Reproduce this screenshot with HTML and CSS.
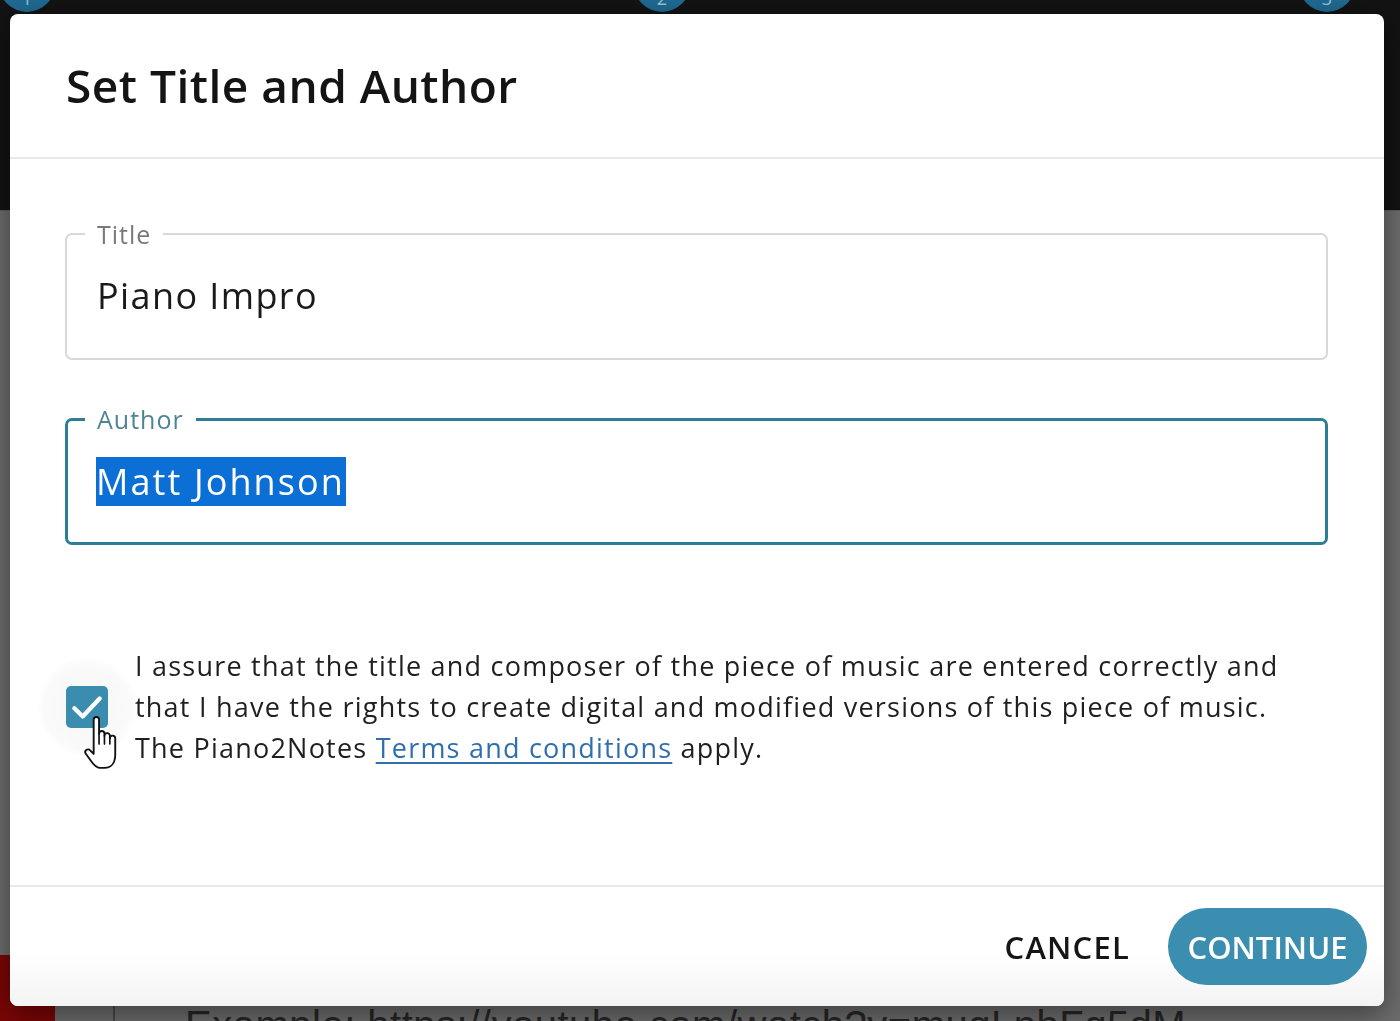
FILE: index.html
```html
<!DOCTYPE html>
<html lang="en">
<head>
<meta charset="utf-8">
<title>Set Title and Author</title>
<link rel="stylesheet" href="styles.css">
</head>
<body>
<div class="page">
  <div class="topband">
    <div class="steps">
      <span class="step step-1">1</span>
      <span class="step step-2">2</span>
      <span class="step step-3">3</span>
    </div>
  </div>
  <div class="main">
    <div class="example-row">
      <div class="red-block"></div>
      <div class="example-box">Example: https://youtube.com/watch?v=muqLnbFq5dM</div>
    </div>
  </div>
</div>

<div class="overlay">
  <div class="dialog" role="dialog" aria-labelledby="dlg-title">
    <header class="dialog-header">
      <h2 id="dlg-title" class="dialog-title">Set Title and Author</h2>
    </header>

    <div class="dialog-body">
      <fieldset class="field">
        <legend class="field-label">Title</legend>
        <div class="field-value">Piano Impro</div>
      </fieldset>

      <fieldset class="field field-focused">
        <legend class="field-label">Author</legend>
        <div class="field-value"><span class="selected">Matt Johnson</span></div>
      </fieldset>

      <div class="consent">
        <div class="check-wrap">
          <span class="checkbox">
            <svg viewBox="0 0 24 24" width="38" height="38" aria-hidden="true">
              <path d="M4 12.8 L9.3 18 L20 6.6" fill="none" stroke="#ffffff" stroke-width="2.7" stroke-linecap="round" stroke-linejoin="round"/>
            </svg>
          </span>
          <svg class="cursor" viewBox="0 0 38 54" width="40" height="56" aria-hidden="true">
            <path d="M10 31 L10 5.5 A2.6 2.6 0 0 1 15.2 5.5 L15.2 19 A2.6 2.6 0 0 1 20.4 19 L20.4 21 A2.6 2.6 0 0 1 25.6 21 L25.6 23.5 A2.6 2.6 0 0 1 30.8 23.5 L30.8 39 C30.8 47 27 52 20.5 52 L16.5 52 C12.5 52 10.5 49.5 8 46 L2.6 38.5 A2.6 2.6 0 0 1 6.6 35 L10 38.5 Z" fill="#ffffff" stroke="#111111" stroke-width="1.8" stroke-linejoin="round"/>
            <path d="M15.2 19 L15.2 29 M20.4 21 L20.4 29 M25.6 23.5 L25.6 29" fill="none" stroke="#111111" stroke-width="1.6" stroke-linecap="round"/>
          </svg>
        </div>
        <p class="consent-text">I assure that the title and composer of the piece of music are entered correctly and<br>that I have the rights to create digital and modified versions of this piece of music.<br>The Piano2Notes <a href="#" class="link">Terms and conditions</a> apply.</p>
      </div>
    </div>

    <footer class="dialog-footer">
      <button type="button" class="btn btn-text">CANCEL</button>
      <button type="button" class="btn btn-primary">CONTINUE</button>
    </footer>
  </div>
</div>
</body>
</html>
```

FILE: styles.css
```css
* { box-sizing: border-box; }

html, body {
  margin: 0;
  padding: 0;
}

body {
  width: 1400px;
  height: 1021px;
  overflow: hidden;
  background: #6d6d6d;
  font-family: "Open Sans", "Liberation Sans", sans-serif;
  color: #1c1c1c;
}

/* ---------- page behind the dialog ---------- */
.page {
  width: 1400px;
  height: 1021px;
  display: flex;
  flex-direction: column;
}

.topband {
  height: 210px;
  background: #131313;
  overflow: hidden;
}

.steps {
  display: flex;
  margin-top: -44px;
}

.step {
  width: 56px;
  height: 56px;
  border-radius: 50%;
  background: #1f6b93;
  color: #9cc3d8;
  display: flex;
  align-items: flex-end;
  justify-content: center;
  font-size: 18px;
  padding-bottom: 2px;
  flex: none;
}

.step-1 { margin-left: -1px; }
.step-2 { margin-left: 579px; }
.step-3 { margin-left: 609px; }

.main {
  flex: 1;
  display: flex;
  flex-direction: column;
  justify-content: flex-end;
  border-top: 1px solid #5e5e5e;
}

.example-row {
  display: flex;
  height: 66px;
}

.red-block {
  width: 55px;
  background: #7c0505;
}

.example-box {
  flex: 1;
  border-left: 2px solid #4a4a4a;
  margin-left: 58px;
  padding: 50px 0 0 70px;
  font-size: 40px;
  line-height: 40px;
  color: #262626;
  white-space: nowrap;
  font-family: "Liberation Sans", sans-serif;
  letter-spacing: 0.5px;
}

/* ---------- dialog ---------- */
.overlay {
  position: fixed;
  inset: 0;
  padding: 14px 16px 15px 10px;
  display: flex;
}

.dialog {
  flex: 1;
  background: #ffffff;
  border-radius: 8px;
  box-shadow: 0 8px 30px rgba(0, 0, 0, 0.45);
  display: flex;
  flex-direction: column;
  overflow: hidden;
}

.dialog-header {
  height: 145px;
  padding: 0 56px;
  display: flex;
  align-items: center;
  border-bottom: 2px solid #e9e9e9;
}

.dialog-title {
  margin: 0;
  padding-bottom: 2px;
  font-size: 46px;
  font-weight: 600;
  letter-spacing: 0.5px;
  color: #141414;
}

.dialog-body {
  flex: 1;
  padding: 60px 56px 0 55px;
  display: flex;
  flex-direction: column;
}

.field {
  margin: 0 0 44px 0;
  padding: 0 0 0 18px;
  border: 2px solid #d8d8d8;
  border-radius: 7px;
  height: 141px;
  min-width: 0;
}

.field-label {
  padding: 0 12px;
  font-size: 25px;
  line-height: 30px;
  color: #7a7a7a;
  letter-spacing: 1px;
}

.field-value {
  margin-left: 12px;
  margin-top: 22px;
  font-size: 36px;
  line-height: 49px;
  color: #1a1a1a;
  letter-spacing: 1.4px;
}

.field-focused {
  border: 3px solid #2c7d96;
  padding-left: 17px;
}

.field-focused .field-label {
  color: #4e8596;
}

.field-focused .field-value {
  margin-left: 11px;
  margin-top: 23px;
  letter-spacing: 2.1px;
}

.selected {
  display: inline-block;
  line-height: 49px;
  background: #0b6fd5;
  color: #ffffff;
  padding-right: 1px;
}

/* ---------- consent ---------- */
.consent {
  margin-top: 56px;
  display: flex;
  align-items: center;
  gap: 27px;
}

.check-wrap {
  position: relative;
  width: 42px;
  height: 42px;
  margin-left: 1px;
  flex: none;
}

.check-wrap::before {
  content: "";
  position: absolute;
  left: -29px;
  top: -29px;
  width: 100px;
  height: 100px;
  border-radius: 50%;
  background: radial-gradient(circle, rgba(0,0,0,0.04) 0%, rgba(0,0,0,0.02) 60%, rgba(0,0,0,0) 72%);
}

.checkbox {
  position: relative;
  width: 42px;
  height: 42px;
  border-radius: 5px;
  background: #3b8db0;
  display: flex;
  align-items: center;
  justify-content: center;
}

.cursor {
  position: absolute;
  left: 17px;
  top: 28px;
}

.consent-text {
  margin: 0;
  font-size: 27px;
  line-height: 41px;
  color: #1f1f1f;
  letter-spacing: 1.22px;
  white-space: nowrap;
}

.link {
  color: #2f6fae;
  text-decoration: underline;
  text-underline-offset: 4px;
  text-decoration-thickness: 2px;
}

/* ---------- footer ---------- */
.dialog-footer {
  height: 121px;
  border-top: 2px solid #e9e9e9;
  padding: 0 17px 0 0;
  display: flex;
  align-items: center;
  justify-content: flex-end;
  gap: 20px;
  background: linear-gradient(to bottom, #ffffff 0%, #ffffff 55%, #f3f3f3 100%);
}

.btn {
  font-family: "Open Sans", "Liberation Sans", sans-serif;
  font-size: 31px;
  font-weight: 600;
  letter-spacing: 0;
  border: none;
  cursor: pointer;
  height: 77px;
}

.btn-text {
  background: transparent;
  color: #161616;
  padding: 0 18px;
  letter-spacing: 1.2px;
}

.btn-primary {
  background: #3c8eb0;
  color: #ffffff;
  border-radius: 39px;
  padding: 0 10px;
  width: 199px;
}
```
